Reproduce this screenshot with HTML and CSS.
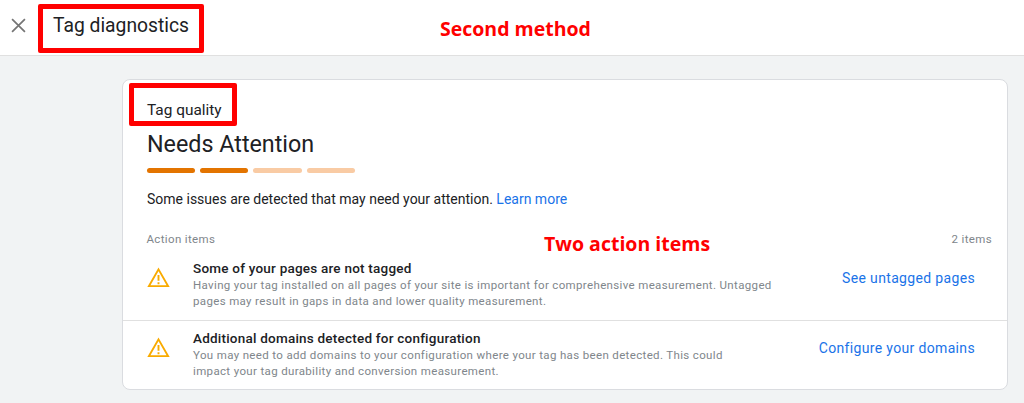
FILE: index.html
```html
<!DOCTYPE html>
<html lang="en">
<head>
<meta charset="utf-8">
<title>Tag diagnostics</title>
<link rel="stylesheet" href="styles.css">
</head>
<body>
<header class="topbar">
  <svg class="close" viewBox="0 0 14 14" width="15" height="15"><path d="M1 1L13 13M13 1L1 13"/></svg>
  <h1 class="title">Tag diagnostics</h1>
</header>
<main class="page">
  <section class="card">
    <h2 class="eyebrow">Tag quality</h2>
    <div class="status">Needs Attention</div>
    <div class="meter">
      <span class="seg on"></span><span class="seg on"></span><span class="seg"></span><span class="seg"></span>
    </div>
    <p class="summary">Some issues are detected that may need your attention. <a href="#">Learn more</a></p>
    <div class="list-head"><span>Action items</span><span>2 items</span></div>
    <div class="item first">
      <svg class="warn" viewBox="0 0 24 22" width="23" height="21"><path class="tri" d="M12 2.5L22 20H2Z"/><path class="mark" d="M12 8.5v6M12 16v2"/></svg>
      <div class="body">
        <h3>Some of your pages are not tagged</h3>
        <p>Having your tag installed on all pages of your site is important for comprehensive measurement. Untagged<br>pages may result in gaps in data and lower quality measurement.</p>
      </div>
      <a class="action" href="#">See untagged pages</a>
    </div>
    <div class="item">
      <svg class="warn" viewBox="0 0 24 22" width="23" height="21"><path class="tri" d="M12 2.5L22 20H2Z"/><path class="mark" d="M12 8.5v6M12 16v2"/></svg>
      <div class="body">
        <h3>Additional domains detected for configuration</h3>
        <p>You may need to add domains to your configuration where your tag has been detected. This could<br>impact your tag durability and conversion measurement.</p>
      </div>
      <a class="action" href="#">Configure your domains</a>
    </div>
  </section>
</main>
<div class="mark-box box-title"></div>
<div class="mark-box box-quality"></div>
<div class="note note-method">Second method</div>
<div class="note note-items">Two action items</div>
</body>
</html>
```
FILE: styles.css
```css
* { box-sizing: border-box; }
html, body { margin: 0; height: 100%; }
body {
  position: relative;
  width: 1024px;
  height: 403px;
  overflow: hidden;
  background: #f1f3f4;
  font-family: Roboto, "Liberation Sans", sans-serif;
  color: #202124;
}
h1, h2, h3, p { margin: 0; font-weight: 400; }
a { color: #1a73e8; text-decoration: none; }

.topbar {
  height: 56px;
  display: flex;
  align-items: center;
  padding: 0 0 3px 11px;
  background: #fff;
  border-bottom: 1px solid #e0e0e0;
}
.close { margin-bottom: 2px; fill: none; stroke: #757575; stroke-width: 1.6; }
.title { margin-left: 27px; font-size: 19.3px; line-height: 24px; }

.page { padding: 23px 16px 0 122px; }
.card {
  width: 886px;
  height: 311px;
  padding: 20px 0 0;
  background: #fff;
  border: 1px solid #dadce0;
  border-radius: 8px;
}
.eyebrow { margin-left: 24px; font-size: 15.4px; line-height: 20px; }
.status { margin: 8px 0 0 24px; font-size: 23.3px; line-height: 32px; }
.meter { display: flex; gap: 5px; margin: 8px 0 0 23.5px; }
.seg { width: 48.4px; height: 5px; border-radius: 3px; background: #f9cba4; }
.seg.on { background: #e37400; }
.summary { margin: 16px 0 0 24px; font-size: 14px; line-height: 20px; }
.list-head {
  display: flex;
  justify-content: space-between;
  margin: 22px 15px 4px 23.5px;
  font-size: 11.5px;
  line-height: 16px;
  letter-spacing: .35px;
  color: #80868b;
}
.item {
  display: flex;
  align-items: flex-start;
  padding: 9px 32px 11px 24px;
  border-top: 1px solid #e0e0e0;
}
.item.first { border-top: 0; }
.warn { flex: none; margin-top: 7px; }
.tri { fill: none; stroke: #f9ab00; stroke-width: 2; stroke-linejoin: miter; }
.mark { fill: none; stroke: #f9ab00; stroke-width: 2; }
.body { flex: 1; margin-left: 23px; }
.body h3 { margin-bottom: 1px; font-size: 13.5px; line-height: 16px; font-weight: 500; letter-spacing: .22px; color: #202124; }
.body p { font-size: 11.5px; line-height: 16px; letter-spacing: .35px; color: #80868b; }
.action { margin-top: 8px; font-size: 14px; line-height: 20px; font-weight: 400; letter-spacing: .34px; }

.mark-box { position: absolute; border: 5px solid #f00; border-radius: 2px; }
.box-title { left: 38px; top: 4px; width: 166px; height: 49px; }
.box-quality { left: 129px; top: 83px; width: 108px; height: 43px; }
.note {
  position: absolute;
  font-family: "Open Sans", "Liberation Sans", sans-serif;
  font-size: 19.5px;
  line-height: 24px;
  font-weight: 700;
  color: #f00;
  text-shadow: 1px 1px 0 #fff, -1px 1px 0 #fff, 1px -1px 0 #fff, -1px -1px 0 #fff;
}
.note-method { left: 440px; top: 17px; }
.note-items { left: 544px; top: 232px; }
```
